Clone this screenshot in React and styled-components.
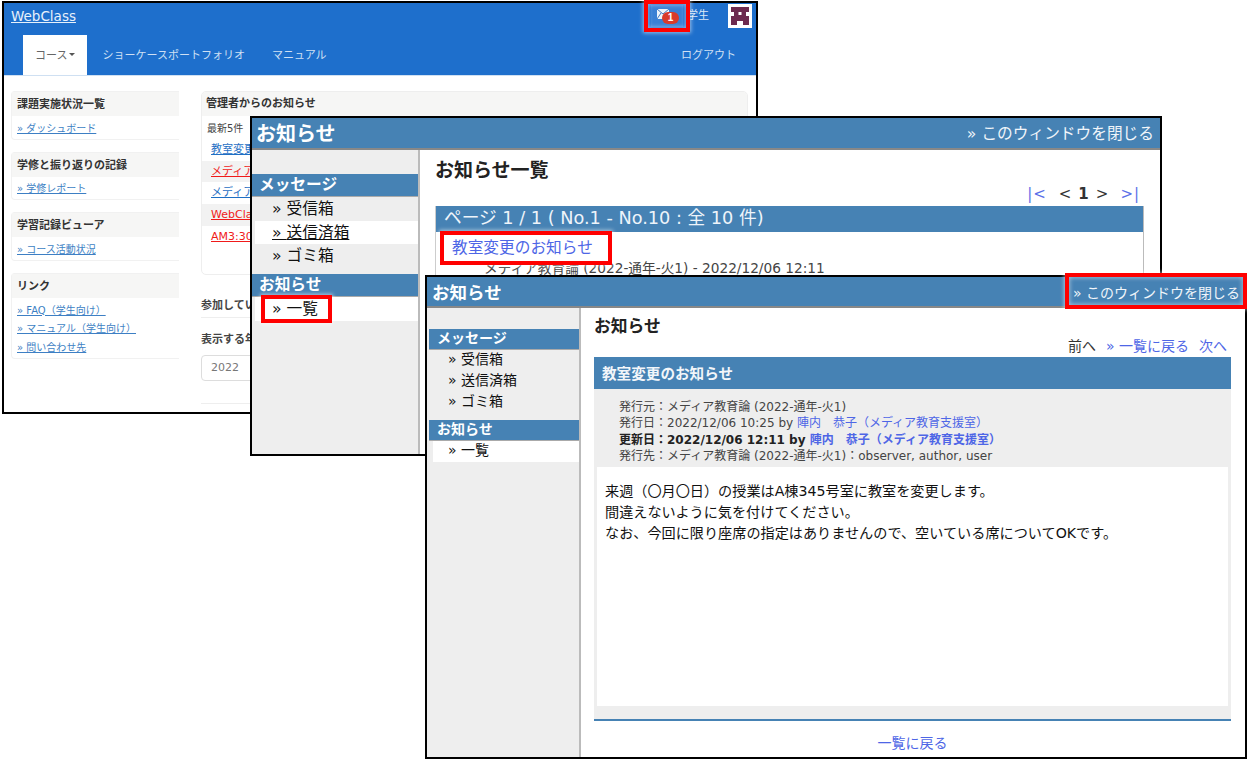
import React from "react";
import styled, { createGlobalStyle, css } from "styled-components";

const Global = createGlobalStyle`
  html, body { margin: 0; padding: 0; background: #fff; }
  body { font-family: "DejaVu Sans", "Noto Sans CJK JP", sans-serif; color: #222; }
  * { box-sizing: border-box; }
`;

const Canvas = styled.div`
  position: relative;
  width: 1249px;
  height: 760px;
  overflow: hidden;
  background: #fff;
`;

const Win = styled.section`
  position: absolute;
  left: ${(p) => p.$x}px;
  top: ${(p) => p.$y}px;
  width: ${(p) => p.$w}px;
  height: ${(p) => p.$h}px;
  border: 2px solid #000;
  background: #fff;
  overflow: hidden;
  display: flex;
  flex-direction: column;
`;

const Highlight = styled.div`
  position: absolute;
  left: ${(p) => p.$x}px;
  top: ${(p) => p.$y}px;
  width: ${(p) => p.$w}px;
  height: ${(p) => p.$h}px;
  border: 4px solid #f00;
  box-shadow: 0 0 4px 1px rgba(255, 255, 255, 0.55), inset 0 0 4px 1px rgba(255, 255, 255, 0.45);
`;

/* ---------- WebClass portal window ---------- */
const PortalHead = styled.header`
  background: #1e6fcc;
  height: 73px;
  flex: none;
  border-bottom: 1px solid #cfe0f2;
  display: flex;
  flex-direction: column;
`;
const TopRow = styled.div`
  height: 32px;
  padding: 0 5px 0 7px;
  display: flex;
  align-items: center;
  position: relative;
`;
const Brand = styled.a`
  color: #e8f1fb;
  font-size: 13.5px;
  text-decoration: underline;
  font-family: "DejaVu Sans", sans-serif;
  margin-top: -7px;
`;
const MailBtn = styled.div`
  position: absolute;
  left: 647px;
  top: 2px;
  width: 32px;
  height: 22px;
  background: #3a80d4;
`;
const MailIcon = styled.svg`
  position: absolute;
  left: 6px;
  top: 4px;
`;
const Badge = styled.span`
  position: absolute;
  left: 11px;
  top: 7px;
  width: 17px;
  height: 12px;
  border-radius: 7px;
  background: #d93a2b;
  color: #fff;
  font: bold 10px/12px "Liberation Sans", sans-serif;
  text-align: center;
`;
const UserName = styled.span`
  position: absolute;
  left: 683px;
  top: 3px;
  font-size: 11px;
  color: #dbe8f7;
`;
const Avatar = styled.svg`
  position: absolute;
  left: 724px;
  top: 1px;
`;
const NavRow = styled.nav`
  flex: 1;
  display: flex;
  align-items: stretch;
  padding: 0 5px 0 19px;
`;
const NavItem = styled.a`
  display: flex;
  align-items: center;
  padding-bottom: 2px;
  font-size: 11px;
  color: ${(p) => (p.$active ? "#666" : "#cfe0f4")};
  background: ${(p) => (p.$active ? "#fff" : "transparent")};
  padding-left: ${(p) => (p.$active ? 12 : p.$tight ? 12 : 15)}px;
  padding-right: ${(p) => (p.$active ? 12 : 15)}px;
  margin-left: ${(p) => (p.$end ? "auto" : "0")};
  white-space: nowrap;
`;
const Caret = styled.span`
  width: 0;
  height: 0;
  margin-left: 2px;
  border: 3px solid transparent;
  border-top-color: #555;
  border-bottom: 0;
`;
const PortalBody = styled.div`
  flex: 1;
  display: grid;
  grid-template-columns: 168px 547px;
  column-gap: 22px;
  padding: 15px 0 0 7px;
  align-items: start;
`;
const SideCol = styled.div`
  display: flex;
  flex-direction: column;
  gap: 12px;
`;
const Card = styled.div`
  border: 1px solid #f1f1f1;
  border-right: 0;
  border-radius: 4px 0 0 4px;
  padding-bottom: 4px;
`;
const CardTitle = styled.div`
  background: #f6f6f5;
  height: 24px;
  padding: 0 5px;
  font-size: 11px;
  font-weight: 700;
  line-height: 25px;
  color: #333;
  white-space: nowrap;
`;
const CardLink = styled.a`
  display: block;
  width: fit-content;
  margin: 5.7px 0 0 5px;
  font-size: 10px;
  line-height: 13px;
  color: #3d7fc4;
  text-decoration: underline;
  white-space: nowrap;
`;
const MainCol = styled.div`
  display: flex;
  flex-direction: column;
`;
const NewsPanel = styled.div`
  height: 184px;
  border: 1px solid #eee;
  border-radius: 5px;
  overflow: hidden;
`;
const NewsTitle = styled(CardTitle)`
  padding: 0 4px;
  line-height: 24px;
`;
const NewsNote = styled.div`
  font-size: 10px;
  padding: 4px 5px;
  height: 23px;
  color: #444;
`;
const NewsRow = styled.a`
  display: block;
  height: 21.7px;
  line-height: 21px;
  padding: 0 9px;
  font-size: 11px;
  text-decoration: underline;
  white-space: nowrap;
  color: ${(p) => (p.$red ? "#f01a1a" : "#1f6fc4")};
  background: ${(p) => (p.$shade ? "#f2f2f2" : "#fff")};
`;
const SectionLabel = styled.div`
  margin-top: ${(p) => p.$top}px;
  font-size: 11px;
  font-weight: 700;
  color: #444;
  line-height: 16px;
`;
const Rule = styled.hr`
  margin: ${(p) => p.$top}px 0 0;
  border: 0;
  border-top: 1px solid #eee;
`;
const YearSelect = styled.div`
  margin-top: 7px;
  width: 200px;
  height: 26px;
  border: 1px solid #ddd;
  border-radius: 4px;
  padding: 0 9px;
  font-size: 11px;
  line-height: 24px;
  color: #777;
`;

/* ---------- Notice windows ---------- */
const NoticeHead = styled.header`
  flex: none;
  height: ${(p) => (p.$big ? 32 : 31)}px;
  background: #4682b4;
  border-bottom: 2px solid #888;
  padding: ${(p) => (p.$big ? "0 6px 2px 4px" : "0 5px")};
  display: flex;
  align-items: center;
  justify-content: space-between;
`;
const NoticeTitle = styled.h1`
  margin: 0;
  color: #fff;
  font-size: ${(p) => (p.$big ? 20 : 17.5)}px;
  font-weight: 700;
  white-space: nowrap;
`;
const CloseLink = styled.a`
  color: #f0f5fa;
  font-size: ${(p) => (p.$big ? 15.7 : 14)}px;
  white-space: nowrap;
`;
const NoticeBody = styled.div`
  flex: 1;
  display: flex;
  min-height: 0;
`;
const Side = styled.aside`
  flex: none;
  width: ${(p) => (p.$big ? 168 : 154)}px;
  background: #eee;
  border-right: 2px solid #bbb;
  padding-top: ${(p) => (p.$big ? 24 : 21)}px;
  ${(p) => !p.$big && css`padding-left: 2px;`}
`;
const SideHead = styled.div`
  background: #4682b4;
  color: #fff;
  font-weight: 700;
  border-bottom: 1px solid #aaa;
  white-space: nowrap;
  ${(p) =>
    p.$big
      ? css`
          height: 23px;
          line-height: 21px;
          font-size: 15.7px;
          padding-left: 7px;
          margin-top: ${p.$gap ? 6.5 : 0}px;
        `
      : css`
          height: 21px;
          line-height: 19px;
          font-size: 14px;
          padding-left: 8px;
          margin-top: ${p.$gap ? 7 : 0}px;
        `}
`;
const SideRow = styled.a`
  display: block;
  white-space: nowrap;
  color: #111;
  background: ${(p) => (p.$on ? "#fff" : "transparent")};
  ${(p) =>
    p.$big
      ? css`
          height: 23.5px;
          line-height: 23px;
          font-size: 15.7px;
          margin-left: 3px;
          padding-left: 17px;
          text-decoration: ${p.$under ? "underline" : "none"};
        `
      : css`
          height: 21px;
          line-height: 18px;
          font-size: 14px;
          margin-left: 4px;
          padding-left: 15px;
        `}
`;
const Content = styled.main`
  flex: 1;
  min-width: 0;
  background: #fff;
  display: flex;
  flex-direction: column;
`;
const ListContent = styled(Content)`
  padding: 9px 16px 0 15px;
`;
const DetailContent = styled(Content)`
  padding: 7px 14px 0 13px;
`;
const PageTitle = styled.h2`
  margin: 0;
  font-size: ${(p) => p.$size}px;
  line-height: 22px;
  font-weight: 700;
  color: #222;
`;
const Pager = styled.div`
  margin-top: 1px;
  height: 24px;
  display: flex;
  justify-content: flex-end;
  align-items: center;
  gap: 12px;
  font-size: 15px;
  padding-right: 4px;
`;
const PagerLink = styled.a`
  color: #5a6fe8;
  letter-spacing: 1px;
`;
const PagerCurrent = styled.span`
  color: #333;
  b { margin: 0 7px; }
`;
const ListTable = styled.div`
  border-right: 1px solid #bbb;
  border-left: 1px solid #ccc;
  height: 200px;
`;
const ListBar = styled.div`
  height: 26px;
  background: #4682b4;
  color: #eef4fa;
  font-size: 17.7px;
  line-height: 25px;
  padding-left: 8px;
  white-space: nowrap;
`;
const ListLink = styled.a`
  display: block;
  margin: 4px 0 0 16px;
  line-height: 24px;
  font-size: 15.7px;
  color: #4e66e6;
`;
const ListMeta = styled.div`
  margin: -1px 0 0 48px;
  font-size: 13.7px;
  line-height: 19px;
  color: #444;
  white-space: nowrap;
`;
const DetailNav = styled.div`
  display: flex;
  justify-content: flex-end;
  gap: 10px;
  height: 21px;
  margin-top: -1px;
  padding-right: 4px;
  font-size: 14px;
  line-height: 20px;
  color: #333;
`;
const DetailLink = styled.a`
  color: #4e66e6;
`;
const Panel = styled.article`
  height: 364px;
  flex: none;
  background: #eee;
  border-bottom: 2px solid #4682b4;
  display: flex;
  flex-direction: column;
`;
const PanelTitle = styled.div`
  flex: none;
  height: 32px;
  background: #4682b4;
  color: #f2f6fa;
  font-size: 14.6px;
  font-weight: 700;
  line-height: 33px;
  padding-left: 8px;
`;
const MetaBlock = styled.div`
  flex: none;
  padding: 10px 0 0 25px;
  height: 78px;
`;
const MetaLine = styled.div`
  font-size: 12px;
  line-height: 16.3px;
  color: ${(p) => (p.$bold ? "#222" : "#444")};
  font-weight: ${(p) => (p.$bold ? 700 : 400)};
  white-space: nowrap;
  a { color: #4e66e6; }
`;
const Message = styled.div`
  flex: none;
  margin: 0 3px;
  height: 239px;
  background: #fff;
  padding: 14px 8px;
  font-size: 14.15px;
  line-height: 21px;
  color: #111;
`;
const BackRow = styled.div`
  flex: 1;
  padding-top: 11px;
  text-align: center;
  font-size: 14px;
`;

const Arrow = () => <>»&nbsp;</>;

function NoticeSide({ big, under }) {
  return (
    <Side $big={big}>
      <SideHead $big={big}>メッセージ</SideHead>
      <SideRow $big={big}><Arrow />受信箱</SideRow>
      <SideRow $big={big} $on={under} $under={under}><Arrow />送信済箱</SideRow>
      <SideRow $big={big}><Arrow />ゴミ箱</SideRow>
      <SideHead $big={big} $gap>お知らせ</SideHead>
      <SideRow $big={big} $on><Arrow />一覧</SideRow>
    </Side>
  );
}

export default function App() {
  return (
    <Canvas>
      <Global />

      <Win $x={2} $y={1} $w={756} $h={413}>
        <PortalHead>
          <TopRow>
            <Brand>WebClass</Brand>
            <MailBtn>
              <MailIcon width="12" height="10" viewBox="0 0 12 10">
                <rect width="12" height="10" fill="#eef4fb" />
                <path d="M0 0l6 5 6-5M0 10l4-6" fill="none" stroke="#3f78c0" strokeWidth="1" />
              </MailIcon>
              <Badge>1</Badge>
            </MailBtn>
            <UserName>学生</UserName>
            <Avatar width="24" height="24" viewBox="0 0 24 24">
              <rect width="24" height="24" fill="#fff" />
              <path d="M3 3h18v5h-3v4h3v9h-6v-4H9v4H3v-9h3V8H3z" fill="#6d2a4f" />
              <rect x="10.5" y="8" width="3" height="3" fill="#fff" />
            </Avatar>
          </TopRow>
          <NavRow>
            <NavItem $active>コース<Caret /></NavItem>
            <NavItem>ショーケースポートフォリオ</NavItem>
            <NavItem $tight>マニュアル</NavItem>
            <NavItem $end>ログアウト</NavItem>
          </NavRow>
        </PortalHead>
        <PortalBody>
          <SideCol>
            <Card>
              <CardTitle>課題実施状況一覧</CardTitle>
              <CardLink>» ダッシュボード</CardLink>
            </Card>
            <Card>
              <CardTitle>学修と振り返りの記録</CardTitle>
              <CardLink>» 学修レポート</CardLink>
            </Card>
            <Card>
              <CardTitle>学習記録ビューア</CardTitle>
              <CardLink>» コース活動状況</CardLink>
            </Card>
            <Card>
              <CardTitle>リンク</CardTitle>
              <CardLink>» FAQ（学生向け）</CardLink>
              <CardLink>» マニュアル（学生向け）</CardLink>
              <CardLink>» 問い合わせ先</CardLink>
            </Card>
          </SideCol>
          <MainCol>
            <NewsPanel>
              <NewsTitle>管理者からのお知らせ</NewsTitle>
              <NewsNote>最新5件</NewsNote>
              <NewsRow>教室変更のお知らせ</NewsRow>
              <NewsRow $red $shade>メディア教育論</NewsRow>
              <NewsRow>メディア教育論</NewsRow>
              <NewsRow $red $shade>WebClass</NewsRow>
              <NewsRow $red>AM3:30</NewsRow>
            </NewsPanel>
            <SectionLabel $top={23}>参加しているコース</SectionLabel>
            <Rule $top={3} />
            <SectionLabel $top={14}>表示する年度</SectionLabel>
            <YearSelect>2022</YearSelect>
            <Rule $top={22} />
          </MainCol>
        </PortalBody>
      </Win>

      <Win $x={250} $y={116} $w={912} $h={340}>
        <NoticeHead $big>
          <NoticeTitle $big>お知らせ</NoticeTitle>
          <CloseLink $big>» このウィンドウを閉じる</CloseLink>
        </NoticeHead>
        <NoticeBody>
          <NoticeSide big under />
          <ListContent>
            <PageTitle $size={19}>お知らせ一覧</PageTitle>
            <Pager>
              <PagerLink>|&lt;</PagerLink>
              <PagerCurrent>&lt;<b>1</b>&gt;</PagerCurrent>
              <PagerLink>&gt;|</PagerLink>
            </Pager>
            <ListTable>
              <ListBar>ページ 1 / 1 ( No.1 - No.10 : 全 10 件)</ListBar>
              <ListLink>教室変更のお知らせ</ListLink>
              <ListMeta>メディア教育論 (2022-通年-火1) - 2022/12/06 12:11</ListMeta>
            </ListTable>
          </ListContent>
        </NoticeBody>
      </Win>

      <Win $x={425} $y={275} $w={822} $h={484}>
        <NoticeHead>
          <NoticeTitle>お知らせ</NoticeTitle>
          <CloseLink>» このウィンドウを閉じる</CloseLink>
        </NoticeHead>
        <NoticeBody>
          <NoticeSide />
          <DetailContent>
            <PageTitle $size={16.8}>お知らせ</PageTitle>
            <DetailNav>
              <span>前へ</span>
              <DetailLink>» 一覧に戻る</DetailLink>
              <DetailLink>次へ</DetailLink>
            </DetailNav>
            <Panel>
              <PanelTitle>教室変更のお知らせ</PanelTitle>
              <MetaBlock>
                <MetaLine>発行元：メディア教育論 (2022-通年-火1)</MetaLine>
                <MetaLine>発行日：2022/12/06 10:25 by <a>陣内　恭子（メディア教育支援室）</a></MetaLine>
                <MetaLine $bold>更新日：2022/12/06 12:11 by <a>陣内　恭子（メディア教育支援室）</a></MetaLine>
                <MetaLine>発行先：メディア教育論 (2022-通年-火1)：observer, author, user</MetaLine>
              </MetaBlock>
              <Message>
                来週（〇月〇日）の授業はA棟345号室に教室を変更します。<br />
                間違えないように気を付けてください。<br />
                なお、今回に限り座席の指定はありませんので、空いている席についてOKです。
              </Message>
            </Panel>
            <BackRow><DetailLink>一覧に戻る</DetailLink></BackRow>
          </DetailContent>
        </NoticeBody>
      </Win>

      <Highlight $x={644} $y={0} $w={46} $h={32} />
      <Highlight $x={261} $y={295} $w={71} $h={28} />
      <Highlight $x={440} $y={231} $w={172} $h={34} />
      <Highlight $x={1065} $y={273} $w={182} $h={36} />
    </Canvas>
  );
}
